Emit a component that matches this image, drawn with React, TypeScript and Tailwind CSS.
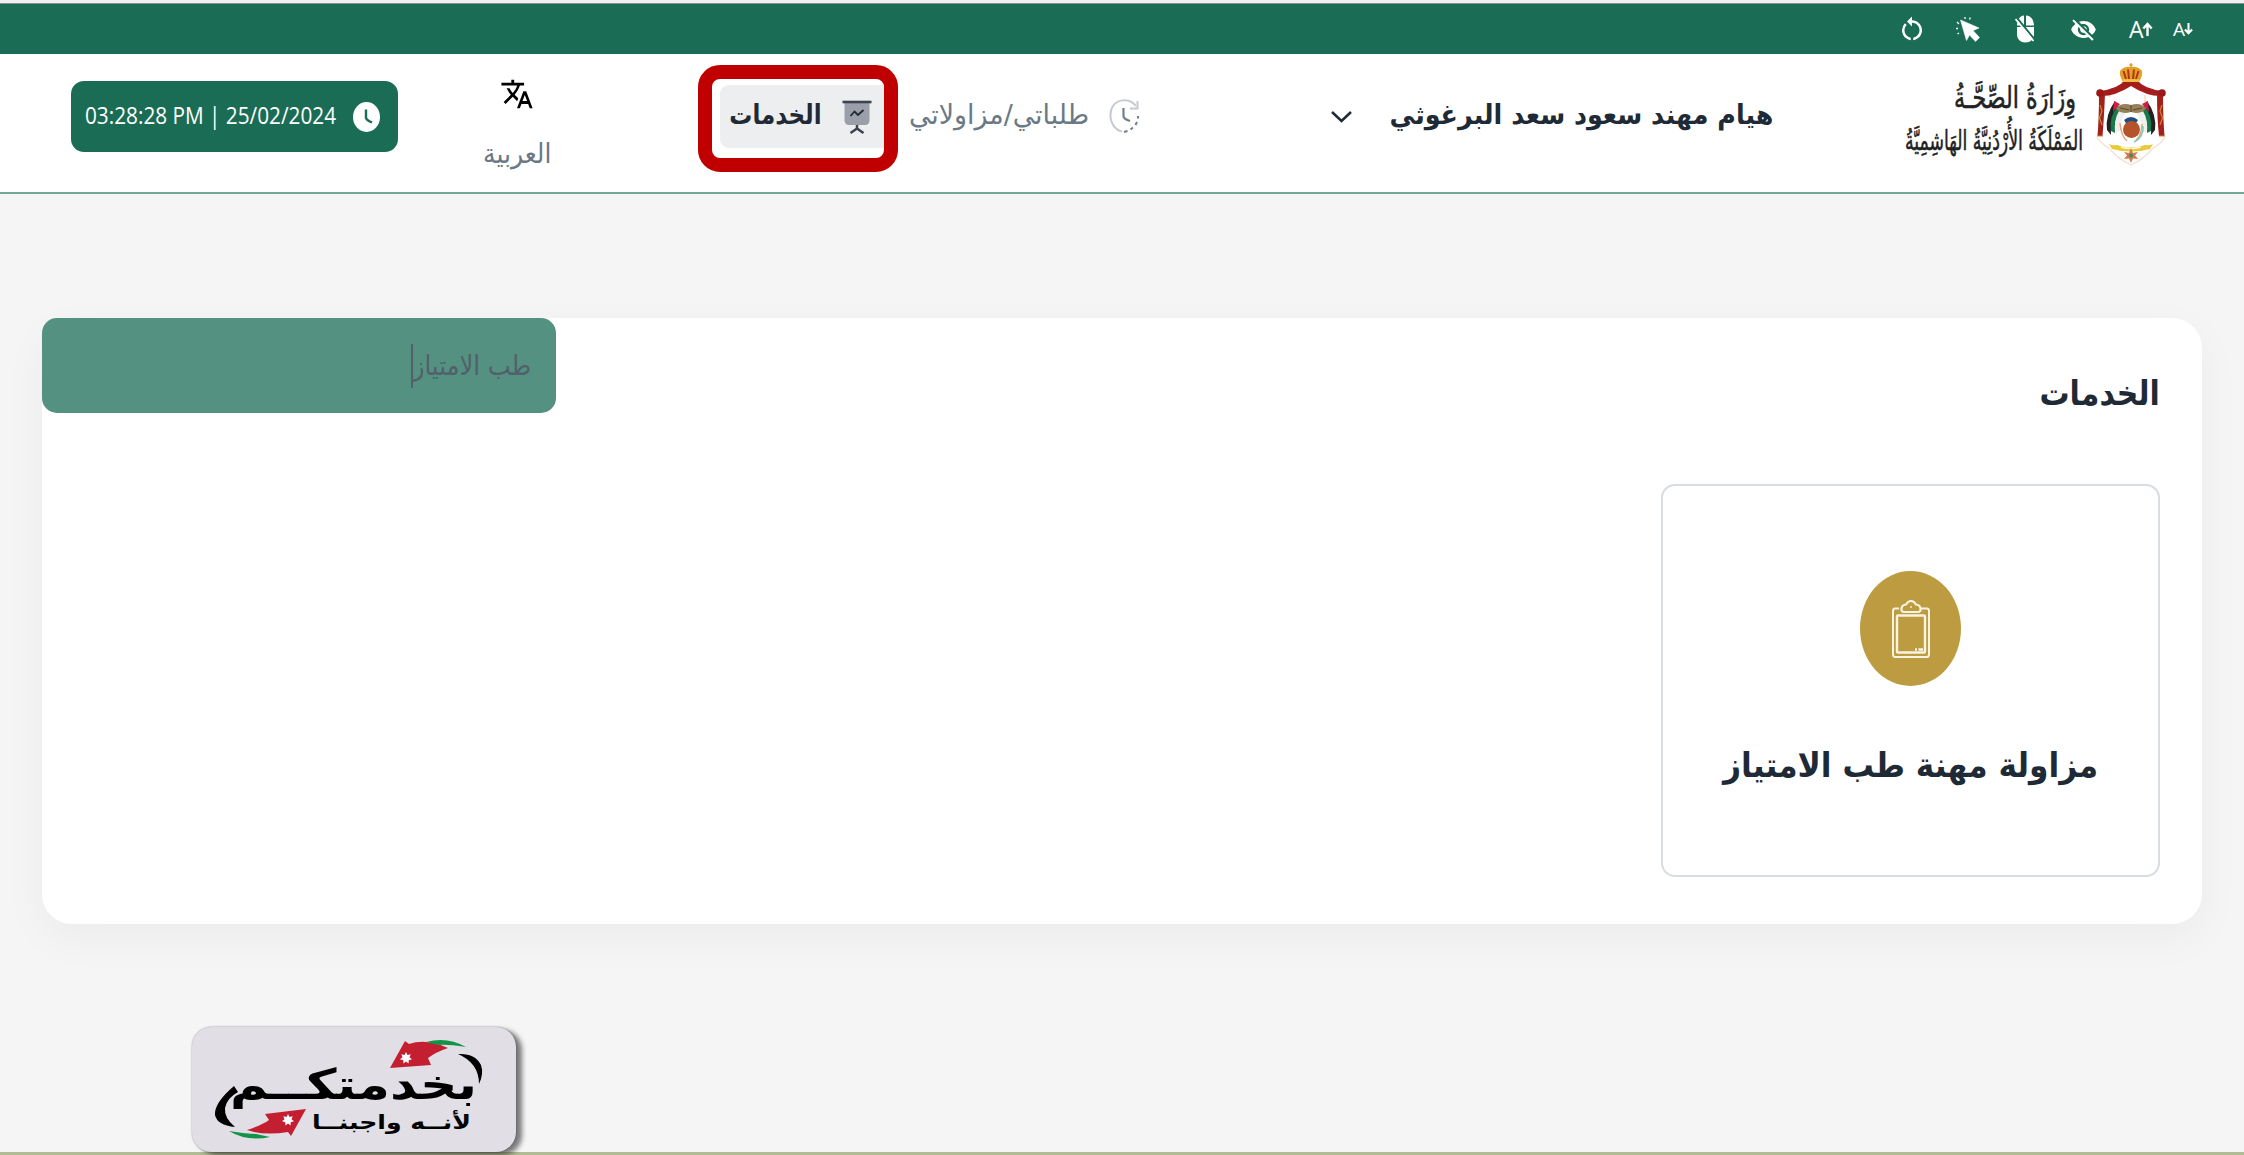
import React from "react";
import { MdRestartAlt, MdTranslate, MdVisibilityOff } from "react-icons/md";

const ar = "font-['DejaVu_Sans_Condensed','DejaVu_Sans',sans-serif]";

function PointerIcon() {
  return (
    <svg viewBox="0 0 24 26" className="h-[27px] w-6" fill="#fff" stroke="#fff">
      <path d="M4.500 3.500 L23 11.500 L17 14 L23.500 21 L19.500 25 L13.500 18.500 L10.500 24 Z" strokeWidth=".6" strokeLinejoin="round" />
      <path d="M9 2.500 V0.500 M13.500 3 L14.300 1 M3 7.500 L1 5.500 M2 12 H0 M3 16.500 L1.500 17.500" strokeWidth="1.300" fill="none" />
    </svg>
  );
}

function MouseOffIcon() {
  return (
    <svg viewBox="0 0 20 28" className="h-[28px] w-5">
      <path d="M2 10 C2.500 4 5 1 9 .5 V10.500 H2 Z M11 .5 C16 1 18.500 4 19 10.500 H11 Z M2 12 H19 V19 C19 24.500 15.500 27.500 10.500 27.500 C5.500 27.500 2 24.500 2 19 Z" fill="#fff" />
      <path d="M2 3 L20 25" stroke="#1a6d54" strokeWidth="2" />
      <path d="M.5 4 L18.500 26" stroke="#fff" strokeWidth="1.800" />
    </svg>
  );
}

function LetterSize({ up }: { up?: boolean }) {
  return (
    <span className={up ? "flex h-[22px] w-6 items-center text-[23px] leading-none text-white" : "flex h-[22px] w-5 items-center text-[19px] leading-none text-white"}>
      <span className={up ? "w-[13px] font-['Open_Sans',sans-serif] font-medium" : "w-[11px] font-['Open_Sans',sans-serif] font-medium"}>A</span>
      <svg viewBox="0 0 10 14" className={up ? "h-[14px] w-[11px]" : "h-[12px] w-[9px] rotate-180"} fill="none" stroke="#fff" strokeWidth="2.400">
        <path d="M5 14 V2 M.8 6.500 L5 2 L9.200 6.500" />
      </svg>
    </span>
  );
}

function Emblem() {
  return (
    <svg viewBox="0 0 70 104" className="h-[104px] w-[70px]">
      <path d="M1 74 Q3 79 14 86 Q22 96 35 102 Q48 96 56 86 Q67 79 69 74" fill="none" stroke="#f6e0cf" strokeWidth="1.300" />
      <path d="M14 34 V30 M49 32 V40" stroke="#f3c9a8" strokeWidth="1" />
      <path d="M3 28 Q22 26 29 17 H41 Q48 26 67 28 V33 Q52 34 35 23 Q18 34 3 33 Z" fill="#a51c1c" />
      <path d="M3 31 H9 Q8 55 6.500 73 H1.500 Q3 55 3 31 Z M61 31 H67 Q67 55 68.500 73 H63 Q61 55 61 31 Z" fill="#a3201c" />
      <path d="M4 42 L6 48 L3.500 55 L6 62 M66 42 L64 48 L66.500 55 L64 62 M1 73 H7 M63 73 H69" stroke="#c98c2c" strokeWidth="1.200" fill="none" />
      <circle cx="4" cy="30" r="3.800" fill="#9c1717" />
      <circle cx="66" cy="30" r="3.800" fill="#9c1717" />
      <path d="M24 8 Q28 3 35 4 Q42 3 46 8 Q47 12 43 19 H27 Q23 12 24 8 Z" fill="#e3a128" />
      <path d="M27.500 8 L30 16 M32 6.500 L33 16 M38 6.500 L37 16 M42.500 8 L40 16" stroke="#b3341b" strokeWidth="2" />
      <path d="M27 17.500 H43" stroke="#f2c14a" strokeWidth="2.500" />
      <path d="M35 0 V5 M33.300 2 H36.700" stroke="#d99a2b" strokeWidth="1.300" />
      <path d="M19 38 Q9 52 11 67 L15 72 Q14 54 24 46 Z M51 38 Q61 52 59 67 L55 72 Q56 54 46 46 Z" fill="#222" />
      <path d="M21 44 Q13 54 15 68 L19 70 Q17 56 27 48 Z M49 44 Q57 54 55 68 L51 70 Q53 56 43 48 Z" fill="#187a4b" />
      <path d="M23 48 Q17 58 20 70 L26 66 Q23 58 30 50 Z M47 48 Q53 58 50 70 L44 66 Q47 58 40 50 Z" fill="#efefed" />
      <path d="M18 38 L24 41 L17 49 Z M52 38 L46 41 L53 49 Z" fill="#d31b45" />
      <path d="M20 45 Q26 39 35 42 Q44 39 50 45 Q46 52 35 49 Q24 52 20 45 Z" fill="#94805a" />
      <path d="M24 45 L33 47 M46 45 L37 47 M35 42 V49" stroke="#5f4c2e" strokeWidth="1.200" />
      <path d="M28 57 Q35 51 42 57 L40 60 H30 Z" fill="#174f86" />
      <path d="M24 60 Q25 73 31 78 M46 61 Q46 72 40 77" stroke="#e3a780" strokeWidth="1.500" fill="none" />
      <path d="M47 63 Q48 74 38 79" stroke="#7fc7b1" strokeWidth="1.500" fill="none" />
      <circle cx="35.500" cy="66.500" r="8.500" fill="#b5532a" />
      <path d="M13 81 Q17 83 21 82 Q35 87 49 82 Q53 83 57 81 L54 86 Q35 91 16 86 Z" fill="#e8c93a" />
      <path d="M25 84 Q35 87 45 84" stroke="#fff8cf" strokeWidth="1.500" fill="none" />
      <path d="M35 85 L37 90 L42 89 L39 92.500 L42 96 L37 95.500 L35 100 L33 95.500 L28 96 L31 92.500 L28 89 L33 90 Z" fill="#d77b4a" />
      <circle cx="35" cy="92.500" r="2" fill="#3d8a70" />
    </svg>
  );
}

function MinistryName() {
  return (
    <svg viewBox="0 0 180 92" className={`h-[92px] w-[180px] overflow-visible ${ar}`} fill="#222" stroke="#222" strokeWidth=".5" direction="rtl">
      <text x="172" y="34" fontSize="30" textLength="122" lengthAdjust="spacingAndGlyphs">وِزَارَةُ الصِّحَّـةُ</text>
      <text x="179" y="76" fontSize="27" textLength="178" lengthAdjust="spacingAndGlyphs">المَمْلَكَةُ الأُرْدُنِيَّةُ الهَاشِمِيَّةُ</text>
    </svg>
  );
}

function HistoryIcon() {
  return (
    <svg viewBox="0 0 30 34" className="h-[34px] w-[30px]" fill="none">
      <path d="M27 7 C20 -2 6 0 2.500 10 C-1 21 5 31 13 32.500" stroke="#c4cad0" strokeWidth="2" />
      <path d="M28.500 2 V9.500 H21" stroke="#c4cad0" strokeWidth="2" />
      <path d="M14.500 9 V17.500 Q15 20 21 22" stroke="#71808e" strokeWidth="2.200" />
      <path d="M29 17 V19.500 M28 23 L26.500 26 M24 28.500 L21.500 30.500 M18.500 32 L15 33" stroke="#71808e" strokeWidth="2" />
    </svg>
  );
}

function BoardIcon() {
  return (
    <svg viewBox="0 0 30 34" className="h-[34px] w-[30px] shrink-0" fill="none">
      <path d="M2.500 2 H27.500 V20 Q27.500 25 23 25 H7 Q2.500 25 2.500 20 Z" fill="#9a9fa9" />
      <path d="M.5 2 H29.500" stroke="#3d444f" strokeWidth="2.600" />
      <path d="M8.500 16 L12.500 11.500 L16 15 L21.500 10" stroke="#1f2a37" strokeWidth="1.800" />
      <path d="M15 25 V28 M8.500 33 L15 28.500 L21.500 33" stroke="#3d444f" strokeWidth="2.500" />
    </svg>
  );
}

function ClipboardIcon() {
  return (
    <svg viewBox="0 0 38 58" className="h-[58px] w-[38px]" fill="none" stroke="#faf3e0" strokeWidth="2">
      <path d="M7 8.500 H3 Q1 8.500 1 11 V54 Q1 57 3 57 H35 Q37 57 37 54 V11 Q37 8.500 35 8.500 H29" />
      <rect x="5" y="15.500" width="28" height="37" rx="1" strokeWidth="2.400" />
      <path d="M12 12 Q9 12 9.500 8.500 Q10 5 14 4.500 Q16 1 19 1 Q22 1 24 4.500 Q28 5 28.500 8.500 Q29 12 26 12 Z" strokeWidth="2.200" />
      <circle cx="19" cy="7" r=".6" strokeWidth="1" />
      <path d="M23 49.500 H25 M26.500 49.500 H31" strokeWidth="2.500" />
    </svg>
  );
}

function Star({ x, y }: { x: number; y: number }) {
  return <path transform={`translate(${x} ${y})`} d="M0 -6 L1.500 -3 L4.700 -3.800 L3.500 -.7 L6 1.300 L2.700 2.200 L2.600 5.400 L0 3.500 L-2.600 5.400 L-2.700 2.200 L-6 1.300 L-3.500 -.7 L-4.700 -3.800 L-1.500 -3 Z" fill="#fff" />;
}

function ServiceBadge() {
  return (
    <svg viewBox="0 0 324 125" className={`h-[125px] w-[324px] ${ar}`} direction="rtl">
      <path d="M198 41 L213 14 L217 17 Q234 11 256 21 Q244 25 236 31 L239 38 Z" fill="#c41f30" />
      <path d="M234 15 Q255 9 274 20 Q255 17 246 18 Z" fill="#129447" />
      <path d="M266 27 Q283 26 289 38 Q292 47 287 57 Q287 36 266 27 Z" fill="#000" />
      <path d="M114 82 L99 109 L96 105 Q72 109 55 103 Q70 98 77 93 L73 87 Z" fill="#c41f30" />
      <path d="M78 110 Q55 115 37 104 Q55 107 64 107 Z" fill="#129447" />
      <path d="M42 59 Q22 76 23 88 Q25 98 43 100 Q32 91 33 81 Q35 71 46 65 Z" fill="#000" />
      <Star x={214} y={31} />
      <Star x={96} y={93} />
      <text x="285" y="72" fontSize="42" fontWeight="700" textLength="247" lengthAdjust="spacingAndGlyphs">بخدمتكــم</text>
      <text x="279" y="102" fontSize="20" fontWeight="700" textLength="159" lengthAdjust="spacingAndGlyphs">لأنــه واجبنــا</text>
    </svg>
  );
}

function TopBar() {
  return (
    <div className="flex h-[54px] w-full flex-col border-t-[3px] border-[#f1f1f1] bg-[#1a6d54]">
      <div className="flex h-[51px] w-full items-center justify-end border-t border-[#7d958c] pr-[51px]">
        <MdRestartAlt className="mr-[29px] size-[30px] text-white" />
        <span className="mr-[35px]"><PointerIcon /></span>
        <span className="mr-[35px]"><MouseOffIcon /></span>
        <MdVisibilityOff className="mr-[32px] size-[27px] text-white" />
        <span className="mr-5"><LetterSize up /></span>
        <LetterSize />
      </div>
    </div>
  );
}

function Header() {
  return (
    <header dir="rtl" className="flex h-[140px] w-full items-start border-b-2 border-[#74a896] bg-white pr-[78px] text-[#1f2a37]">
      <div className="mt-[9px]"><Emblem /></div>
      <div className="mt-[20px] mr-3"><MinistryName /></div>
      <div className="mt-[41px] mr-[131px] flex w-[384px] whitespace-nowrap text-[27px] leading-[40px] font-bold">
        <span className="inline-block origin-right scale-x-[1.045]">هيام مهند سعود سعد البرغوثي</span>
      </div>
      <svg viewBox="0 0 21 12" className="mt-[57px] mr-[37px] h-3 w-[21px]" fill="none" stroke="#1f2a37" strokeWidth="2.500">
        <path d="M1 1 L10.500 10 L20 1" />
      </svg>
      <div className="mt-[45px] mr-[192px]"><HistoryIcon /></div>
      <div className="mt-[41px] mr-5 flex w-[180px] whitespace-nowrap text-[27px] leading-[40px] text-[#6b7885]">
        <span className="inline-block origin-right scale-x-[1.105]">طلباتي/مزاولاتي</span>
      </div>
      <div className="mt-[11px] mr-[11px] h-[107px] w-[200px] rounded-[22px] border-[14px] border-[#c00000] py-[6px] pl-2">
        <div className="flex h-[63px] items-center rounded-l-[9px] bg-[#edeef0] pr-3">
          <BoardIcon />
          <div className="mr-5 mb-[3px] flex w-[93px] whitespace-nowrap text-[27px] leading-[40px] font-bold">
            <span className="inline-block origin-right scale-x-[0.945]">الخدمات</span>
          </div>
        </div>
      </div>
      <div className="mt-[20px] mr-[147px] flex w-[68px] flex-col items-center">
        <MdTranslate className="h-[40px] w-[34px] text-black" />
        <div className="mt-5 flex w-[68px] whitespace-nowrap text-[27px] leading-[40px] text-[#6b7885]">
          <span className="inline-block origin-right scale-x-[1.03]">العربية</span>
        </div>
      </div>
      <div className="mt-[27px] mr-[85px] flex h-[71px] w-[327px] items-center rounded-[13px] bg-[#1a6d54] pr-[18px] text-white">
        <svg viewBox="0 0 27 30" className="h-[30px] w-[27px] shrink-0">
          <ellipse cx="13.500" cy="15" rx="13.500" ry="15" fill="#fff" />
          <path d="M13 7.500 V16 Q14 18.500 19 20.500" fill="none" stroke="#1a6d54" strokeWidth="2.400" />
        </svg>
        <div dir="ltr" className="mr-[17px] mb-1 flex w-[251px] whitespace-nowrap font-['Open_Sans',sans-serif] text-[24px] leading-[30px]">
          <span className="inline-block origin-left scale-x-[0.865]">03:28:28 PM | 25/02/2024</span>
        </div>
      </div>
    </header>
  );
}

export default function App() {
  return (
    <div className={`flex h-[1155px] w-full flex-col overflow-hidden bg-[#f5f5f5] ${ar}`}>
      <TopBar />
      <Header />
      <main dir="rtl" className="mx-[42px] mt-[124px] flex h-[606px] shrink-0 items-start justify-between rounded-[30px] bg-white text-[#1f2a37] shadow-[0_14px_45px_rgba(0,0,0,0.045)]">
        <section className="pt-[50px] pr-[42px]">
          <h1 className="flex h-[50px] w-[120px] whitespace-nowrap text-[34px] leading-[50px] font-bold">
            <span className="inline-block origin-right scale-x-[0.98]">الخدمات</span>
          </h1>
          <div className="mt-[66px] flex h-[393px] w-[499px] flex-col items-center rounded-[14px] border-2 border-[#d8dde2] pt-[85px]">
            <div className="flex h-[115px] w-[101px] items-center justify-center rounded-[50%] bg-[#bd9b40]">
              <ClipboardIcon />
            </div>
            <div className="mt-[54px] flex w-[376px] whitespace-nowrap text-[34px] leading-[50px] font-bold">
              <span className="inline-block origin-right scale-x-[1.022]">مزاولة مهنة طب الامتياز</span>
            </div>
          </div>
        </section>
        <div className="flex h-[95px] w-[514px] items-center rounded-[15px] bg-[#559181] pr-[25px] text-[#51606a]">
          <div className="flex w-[118px] whitespace-nowrap text-[27px] leading-[40px]">
            <span className="inline-block origin-right">طب الامتياز</span>
          </div>
          <span className="h-11 w-[2px] bg-[#51606a]" />
        </div>
      </main>
      <footer className="mt-[103px] flex h-[128px] shrink-0 flex-col border-b-[3px] border-[#b1bb94] pl-[192px]">
        <div className="h-[125px] w-[324px] rounded-[20px] bg-[#e1dee6] shadow-[6px_3px_5px_rgba(0,0,0,0.5),0_0_2px_rgba(0,0,0,0.4)]">
          <ServiceBadge />
        </div>
      </footer>
    </div>
  );
}
